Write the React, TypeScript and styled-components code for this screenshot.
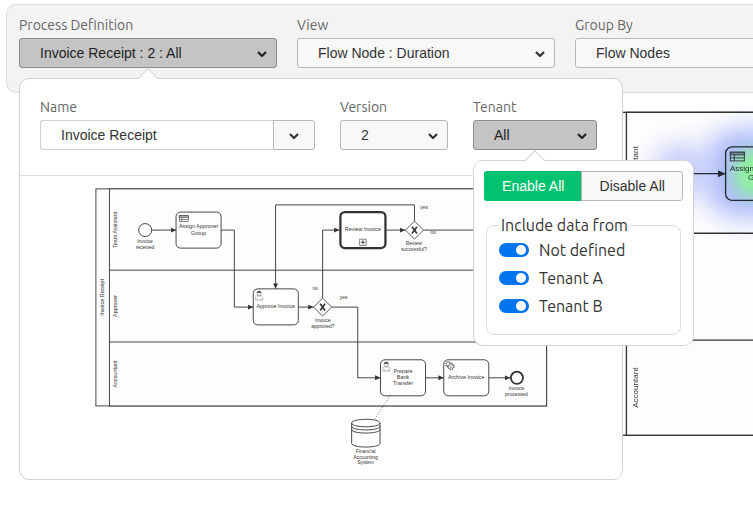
import React, { useId, useState } from "react";
import styled, { createGlobalStyle, css } from "styled-components";

const uiFont = `"Liberation Sans", Arial, sans-serif`;
const labelFont = `Ubuntu, "Open Sans", "Noto Sans", sans-serif`;
const ink = "#333333";

const GlobalStyle = createGlobalStyle`
  *, *::before, *::after { box-sizing: border-box; }
  body { margin: 0; background: #fff; color: ${ink}; font-family: ${labelFont}; }
`;

const Page = styled.main`
  min-height: 100vh;
  padding-top: 4px;
  overflow: hidden;
`;

const ControlPanel = styled.section`
  position: relative;
  z-index: 1;
  display: flex;
  gap: 20px;
  margin-left: 6px;
  padding: 10px 0 24px 12px;
  background: #f3f3f3;
  border: 1px solid #dddddd;
  border-right: 0;
  border-radius: 10px 0 0 10px;
`;

const Field = styled.div<{ $width: number }>`
  position: relative;
  flex: 0 0 ${(p) => p.$width}px;
  display: flex;
  flex-direction: column;
  gap: 3px;
`;

const FieldLabel = styled.label`
  color: #666666;
  font-size: 14px;
  line-height: 20px;
  white-space: nowrap;
`;

const buttonBase = css`
  height: 30px;
  font-family: ${uiFont};
  font-size: 14px;
  line-height: 20px;
  color: ${ink};
  background: #f8f8f8;
  border: 1px solid #b7b7b7;
  border-radius: 3px;
  white-space: nowrap;
  cursor: pointer;
`;

const DropdownButton = styled.button<{ $active?: boolean }>`
  ${buttonBase}
  display: flex;
  align-items: center;
  justify-content: space-between;
  width: 100%;
  padding: 0 9px 0 20px;
  ${(p) =>
    p.$active &&
    css`
      color: #222222;
      background: #c4c4c4;
      border-color: #8c8c8c;
    `}
`;

const Popover = styled.div<{ $width: number; $arrow: number }>`
  position: absolute;
  z-index: 2;
  top: calc(100% + 10px);
  left: 0;
  width: ${(p) => p.$width}px;
  background: #fff;
  border: 1px solid #d3d3d3;
  border-radius: 10px;

  &::before {
    content: "";
    position: absolute;
    top: -8px;
    left: ${(p) => p.$arrow - 8}px;
    width: 14px;
    height: 14px;
    background: #fff;
    border: solid #d3d3d3;
    border-width: 1px 0 0 1px;
    transform: rotate(45deg);
  }
`;

const FieldRow = styled.div`
  display: flex;
  gap: 25px;
  padding: 18px 20px 25px;
  border-bottom: 1px solid #dddddd;
`;

const Combo = styled.div`
  display: flex;
`;

const ComboInput = styled.input`
  flex: 1;
  min-width: 0;
  height: 30px;
  padding: 0 20px;
  font-family: ${uiFont};
  font-size: 14px;
  color: ${ink};
  background: #fff;
  border: 1px solid #cfcfcf;
  border-right: 0;
  border-radius: 3px 0 0 3px;
  outline: none;
`;

const ComboToggle = styled.button`
  ${buttonBase}
  display: flex;
  align-items: center;
  justify-content: center;
  width: 42px;
  padding: 0;
  border-radius: 0 3px 3px 0;
`;

const PreviewArea = styled.div`
  display: flex;
  justify-content: center;
  padding: 12px 0 10px;
`;

const ReportArea = styled.section`
  display: flex;
  margin-top: 18px;
  padding-left: 605px;
`;

const DiagramSvg = styled.svg<{ $width: number }>`
  display: block;
  flex: none;
  width: ${(p) => p.$width}px;
  height: auto;
  overflow: visible;
  isolation: isolate;
  font-family: ${uiFont};
`;

const HeatLayer = styled.g`
  mix-blend-mode: multiply;
`;

const TenantMenu = styled.div`
  padding: 10px;
`;

const ButtonGroup = styled.div`
  display: flex;
`;

const GroupButton = styled.button<{ $selected?: boolean }>`
  ${buttonBase}
  flex: 1 1 auto;
  padding: 0 15px;
  border-radius: ${(p) => (p.$selected ? "3px 0 0 3px" : "0 3px 3px 0")};
  ${(p) =>
    p.$selected &&
    css`
      color: #fff;
      background: #00c26f;
      border-color: #00c26f;
      border-right: 0;
    `}
`;

const TenantGroup = styled.fieldset`
  margin: 12px 2px 0;
  padding: 0 12px 15px;
  min-width: 0;
  border: 1px solid #dddddd;
  border-radius: 8px;
`;

const GroupLegend = styled.legend`
  padding: 0 2px;
  font-size: 16px;
  line-height: 24px;
  white-space: nowrap;
`;

const SwitchList = styled.div`
  display: flex;
  flex-direction: column;
  gap: 2px;
`;

const SwitchRow = styled.label`
  display: flex;
  align-items: center;
  gap: 10px;
  font-size: 16px;
  line-height: 26px;
  cursor: pointer;
`;

const Switch = styled.input`
  appearance: none;
  flex: none;
  display: flex;
  align-items: center;
  width: 30px;
  height: 14px;
  margin: 0;
  padding: 0 3px;
  background: #bbbbbb;
  border-radius: 7px;
  cursor: pointer;

  &::before {
    content: "";
    width: 10px;
    height: 10px;
    background: #fff;
    border-radius: 50%;
  }

  &:checked {
    justify-content: flex-end;
    background: #0074ee;
  }
`;

const Chevron = () => (
  <svg width="10" height="8" viewBox="0 0 10 8" aria-hidden="true">
    <path d="M1 3 5 7 9 3" fill="none" stroke="currentColor" strokeWidth="2.2" />
  </svg>
);

/* ---------- BPMN drawing ---------- */

const line = "#333333";

function Label({ x, y, lines, size = 12, step = 14 }: { x: number; y: number; lines: string[]; size?: number; step?: number }) {
  return (
    <text fontSize={size} textAnchor="middle" fill="#333">
      {lines.map((t, i) => (
        <tspan key={t} x={x} y={y + i * step}>{t}</tspan>
      ))}
    </text>
  );
}

function LaneLabel({ x, y, text }: { x: number; y: number; text: string }) {
  return (
    <text fontSize="12" textAnchor="middle" fill="#333" transform={`translate(${x} ${y}) rotate(-90)`}>{text}</text>
  );
}

function Task({ x, y, lines, thick, icon }: { x: number; y: number; lines: string[]; thick?: boolean; icon?: React.ReactNode }) {
  const first = y + 43 - ((lines.length - 1) * 14) / 2;
  return (
    <g>
      <rect x={x} y={y} width="100" height="80" rx="10" fill="#fff" stroke={line} strokeWidth={thick ? 5 : 2} />
      <g transform={`translate(${x} ${y})`}>{icon}</g>
      <Label x={x + 50} y={first} lines={lines} />
    </g>
  );
}

const UserIcon = () => (
  <g fill="#fff" stroke="#555" strokeWidth="0.8">
    <path d="M5 25v-5c0-3 2-5 5-6h6c3 1 5 3 5 6v5z" />
    <path d="M9 14c0 4 8 4 8 0M9 25v-4M17 25v-4" fill="none" />
    <circle cx="13" cy="10" r="4.5" />
    <path d="M8.5 9.500c-1-6 9.500-6 9 0-2-2-3 0-5-1.500-1 1-3 .5-4 1.500z" fill="#333" />
  </g>
);

const TableIcon = () => (
  <g fill="none" stroke="#444" strokeWidth="1.4">
    <rect x="7" y="8" width="21" height="13" />
    <rect x="7" y="8" width="21" height="4" fill="#aaa" />
    <path d="M7 16.500h21M13 12v9" />
  </g>
);

const GearIcon = () => (
  <g fill="#fff" stroke="#555">
    <circle cx="10" cy="10" r="5.500" strokeWidth="3" strokeDasharray="2.300 2" />
    <circle cx="10" cy="10" r="4.500" />
    <circle cx="16" cy="15" r="6.500" strokeWidth="3.500" strokeDasharray="2.700 2.400" />
    <circle cx="16" cy="15" r="5.500" />
    <circle cx="16" cy="15" r="2.500" />
  </g>
);

const SubProcessMarker = () => (
  <g fill="none" stroke={line}>
    <rect x="43" y="60" width="14" height="14" strokeWidth="1.300" />
    <path d="M50 62.500v9M45.500 67h9" strokeWidth="2" />
  </g>
);

function Gateway({ x, y }: { x: number; y: number }) {
  return (
    <g transform={`translate(${x} ${y})`}>
      <path d="M0-20 20 0 0 20-20 0z" fill="#fff" stroke={line} strokeWidth="1.800" />
      <path d="M-5.500-7.500 5.500 7.500M5.500-7.500-5.500 7.500" stroke={line} strokeWidth="3.600" />
    </g>
  );
}

function ProcessDiagram({ width, heat, title }: { width: number; heat?: boolean; title: string }) {
  const id = useId().replace(/[^a-zA-Z0-9]/g, "");
  const arrow = `url(#arrow${id})`;
  return (
    <DiagramSvg $width={width} viewBox="-2 -2 1006 624" role="img" aria-label={title}>
      <defs>
        <marker id={`arrow${id}`} viewBox="0 0 12 12" refX="12" refY="6" markerWidth="12" markerHeight="12" markerUnits="userSpaceOnUse" orient="auto">
          <path d="M0 .5 12 6 0 11.500z" fill={line} />
        </marker>
        <filter id={`soft${id}`} x="-100%" y="-100%" width="300%" height="300%" colorInterpolationFilters="sRGB">
          <feGaussianBlur stdDeviation="20" />
        </filter>
        <filter id={`core${id}`} x="-100%" y="-100%" width="300%" height="300%" colorInterpolationFilters="sRGB">
          <feGaussianBlur stdDeviation="11" />
        </filter>
      </defs>

      <g fill="#fdfdfd" stroke={line} strokeWidth="2">
        <rect x="0" y="0" width="1001" height="482" />
        <rect x="30" y="0" width="971" height="482" />
        <path d="M30 180.500H1001M30 340H1001" />
      </g>
      <LaneLabel x={18} y={241} text="Invoice Receipt" />
      <LaneLabel x={47} y={91} text="Team Assistant" />
      <LaneLabel x={47} y={260} text="Approver" />
      <LaneLabel x={47} y={411} text="Accountant" />

      <g fill="none" stroke={line} strokeWidth="2">
        <path d="M124 91.500H178" markerEnd={arrow} />
        <path d="M278 91.500H307.500V262.500H349.500" markerEnd={arrow} />
        <path d="M449.500 262.500H483.500" markerEnd={arrow} />
        <path d="M503.500 242.500V91.500H541" markerEnd={arrow} />
        <path d="M645 91.500H687.500" markerEnd={arrow} />
        <path d="M707.500 71.500V35.500H399V222" markerEnd={arrow} />
        <path d="M727.500 91.500H920" markerEnd={arrow} />
        <path d="M523.500 262.500H581.500V419.500H632" markerEnd={arrow} />
        <path d="M732 419.500H772.500" markerEnd={arrow} />
        <path d="M872.500 419.500H920" markerEnd={arrow} />
      </g>
      <path d="M653 459.500 618 513" fill="none" stroke={line} strokeWidth="1.800" strokeDasharray="2 4" />

      <circle cx="109.500" cy="91.500" r="14.500" fill="#fff" stroke={line} strokeWidth="2" />
      <Label x={109} y={120} lines={["Invoice", "received"]} size={11} step={13} />
      <Task x={178} y={51.5} lines={["Assign Approver", "Group"]} icon={<TableIcon />} />
      <Task x={349.5} y={222} lines={["Approve Invoice"]} icon={<UserIcon />} />
      <Gateway x={503.5} y={262.5} />
      <Label x={504} y={296} lines={["Invoice", "approved?"]} size={11} step={13} />
      <Task x={543} y={51.5} lines={["Review Invoice"]} thick icon={<SubProcessMarker />} />
      <Gateway x={707.5} y={91.5} />
      <Label x={706} y={125} lines={["Review", "successful?"]} size={11} step={13} />
      <Label x={729} y={45} lines={["yes"]} size={11} />
      <Label x={749} y={101} lines={["no"]} size={11} />
      <Label x={487} y={225} lines={["no"]} size={11} />
      <Label x={550} y={245} lines={["yes"]} size={11} />
      <Task x={632} y={379.5} lines={["Prepare", "Bank", "Transfer"]} icon={<UserIcon />} />
      <Task x={772.5} y={379.5} lines={["Archive Invoice"]} icon={<GearIcon />} />
      <circle cx="935" cy="419.500" r="13.500" fill="#fff" stroke={line} strokeWidth="4" />
      <Label x={934} y={446} lines={["Invoice", "processed"]} size={11} step={13} />

      <g fill="#fff" stroke={line} strokeWidth="2">
        <path d="M568 520V565C568 576 631 576 631 565V520C631 509 568 509 568 520Z" />
        <path d="M568 520C568 531 631 531 631 520M568 527C568 538 631 538 631 527M568 534C568 545 631 545 631 534" fill="none" />
      </g>
      <Label x={599} y={586} lines={["Financial", "Accounting", "System"]} size={11} step={13} />

      {heat && (
        <HeatLayer>
          <circle cx="112" cy="88" r="42" fill="#c6ccfa" filter={`url(#soft${id})`} />
          <rect x="152" y="26" width="160" height="130" rx="40" fill="#aab8fc" filter={`url(#soft${id})`} />
          <rect x="190" y="56" width="80" height="70" rx="25" fill="#90f0a0" filter={`url(#core${id})`} />
        </HeatLayer>
      )}
    </DiagramSvg>
  );
}

/* ---------- Controls ---------- */

function Dropdown({ label, value, width, open, children }: { label: string; value: string; width: number; open?: boolean; children?: React.ReactNode }) {
  const id = useId();
  return (
    <Field $width={width}>
      <FieldLabel htmlFor={id}>{label}</FieldLabel>
      <DropdownButton id={id} type="button" $active={open} aria-haspopup="true" aria-expanded={!!open}>
        {value}
        <Chevron />
      </DropdownButton>
      {children}
    </Field>
  );
}

const tenants = ["Not defined", "Tenant A", "Tenant B"];

function TenantSelection() {
  const [enabled, setEnabled] = useState<string[]>(tenants);
  const toggle = (name: string) =>
    setEnabled((cur) => (cur.includes(name) ? cur.filter((t) => t !== name) : [...cur, name]));
  return (
    <TenantMenu>
      <ButtonGroup>
        <GroupButton type="button" $selected onClick={() => setEnabled(tenants)}>Enable All</GroupButton>
        <GroupButton type="button" onClick={() => setEnabled([])}>Disable All</GroupButton>
      </ButtonGroup>
      <TenantGroup>
        <GroupLegend>Include data from</GroupLegend>
        <SwitchList>
          {tenants.map((name) => (
            <SwitchRow key={name}>
              <Switch type="checkbox" checked={enabled.includes(name)} onChange={() => toggle(name)} />
              {name}
            </SwitchRow>
          ))}
        </SwitchList>
      </TenantGroup>
    </TenantMenu>
  );
}

export default function App() {
  const [name, setName] = useState("Invoice Receipt");
  return (
    <Page>
      <GlobalStyle />
      <ControlPanel>
        <Dropdown label="Process Definition" value="Invoice Receipt : 2 : All" width={258} open>
          <Popover $width={604} $arrow={129}>
            <FieldRow>
              <Field $width={275}>
                <FieldLabel htmlFor="definition-name">Name</FieldLabel>
                <Combo>
                  <ComboInput id="definition-name" type="text" value={name} onChange={(e) => setName(e.target.value)} />
                  <ComboToggle type="button" aria-label="Show definitions">
                    <Chevron />
                  </ComboToggle>
                </Combo>
              </Field>
              <Dropdown label="Version" value="2" width={108} />
              <Dropdown label="Tenant" value="All" width={124} open>
                <Popover $width={221} $arrow={62}>
                  <TenantSelection />
                </Popover>
              </Dropdown>
            </FieldRow>
            <PreviewArea>
              <ProcessDiagram width={453} title="Invoice Receipt preview" />
            </PreviewArea>
          </Popover>
        </Dropdown>
        <Dropdown label="View" value="Flow Node : Duration" width={258} />
        <Dropdown label="Group By" value="Flow Nodes" width={258} />
      </ControlPanel>
      <ReportArea>
        <ProcessDiagram width={674} heat title="Flow node duration heatmap" />
      </ReportArea>
    </Page>
  );
}
